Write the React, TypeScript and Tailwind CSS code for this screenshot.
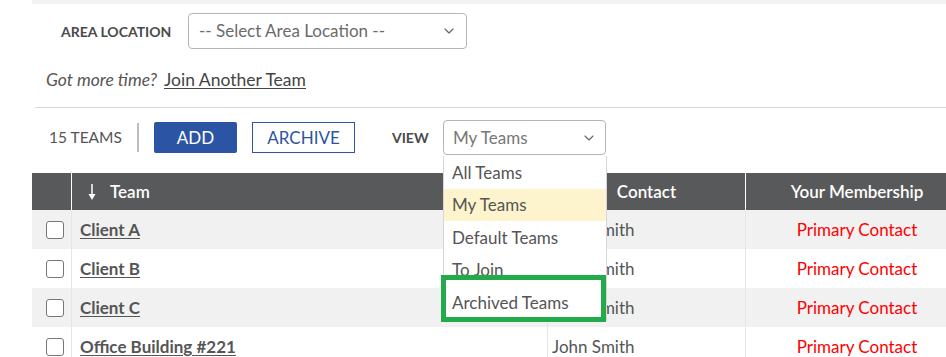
import { ChevronDown } from "lucide-react";

const rows = [
  { team: "Client A", contact: "John Smith", membership: "Primary Contact" },
  { team: "Client B", contact: "John Smith", membership: "Primary Contact" },
  { team: "Client C", contact: "John Smith", membership: "Primary Contact" },
  { team: "Office Building #221", contact: "John Smith", membership: "Primary Contact" },
];

const viewOptions = ["All Teams", "My Teams", "Default Teams", "To Join", "Archived Teams"];

function SortArrow() {
  return (
    <svg width="8" height="18" viewBox="0 0 8 18" className="shrink-0">
      <line x1="4" y1="1" x2="4" y2="12" stroke="white" strokeWidth="1.5" />
      <polygon points="0.5,11 7.5,11 4,17" fill="white" />
    </svg>
  );
}

export default function App() {
  return (
    <div className="relative w-[946px] h-[357px] overflow-hidden bg-white font-['Lato','Liberation_Sans',sans-serif] text-[#555]">
      <div className="ml-[32px] w-[936px]">
        {/* top strip */}
        <div className="h-[4px] bg-[#f2f2f2]" />

        {/* area location */}
        <div className="mt-[9px] flex items-center pl-[29px]">
          <span className="w-[127px] text-[14px] font-bold text-[#4a4a4a]">AREA LOCATION</span>
          <div className="flex h-[36px] w-[279px] items-center justify-between rounded-[4px] border border-[#b5b5b5] pl-[10px] pr-[9px]">
            <span className="text-[17px] text-[#6b6b6b]">-- Select Area Location --</span>
            <ChevronDown className="h-[16px] w-[16px] text-[#666]" strokeWidth={1.75} />
          </div>
        </div>

        <div className="mt-[19px] flex h-[24px] items-center pl-[14px] text-[17.5px]">
          <span className="italic text-[#555]">Got more time?</span>
          <span className="ml-[7px] text-[#444] underline underline-offset-2">Join Another Team</span>
        </div>

        <div className="ml-[3px] mt-[15px] border-t border-[#d9d9d9]" />

        {/* toolbar */}
        <div className="mt-[12px] flex h-[35px] items-center pl-[17px]">
          <span className="w-[71px] whitespace-nowrap text-[15.5px] text-[#555]">15 TEAMS</span>
          <div className="ml-[17px] h-[29px] w-[2px] bg-[#bdbdbd]" />
          <button className="ml-[15px] h-[31px] w-[83px] rounded-[2px] bg-[#2c54a4] text-[17px] text-white">
            ADD
          </button>
          <button className="ml-[15px] h-[31px] w-[103px] border border-[#2c54a4] text-[17px] text-[#2c54a4]">
            ARCHIVE
          </button>
          <span className="ml-[37px] w-[51px] text-[14px] font-bold text-[#4a4a4a]">VIEW</span>
          <div className="relative">
            <div className="flex h-[35px] w-[163px] items-center justify-between rounded-[4px] border border-[#b5b5b5] pl-[9px] pr-[8px]">
              <span className="text-[17px] text-[#777]">My Teams</span>
              <ChevronDown className="h-[16px] w-[16px] text-[#666]" strokeWidth={1.75} />
            </div>
            {/* open dropdown */}
            <div className="absolute left-0 top-[36px] z-10 w-[164px] border border-t-0 border-[#d6d6d6] bg-white text-[17px] text-[#555]">
              {viewOptions.map((opt) => (
                <div
                  key={opt}
                  className={`flex h-[32.5px] items-center pl-[8px] ${opt === "My Teams" ? "bg-[#fdf3cd]" : ""}`}
                >
                  {opt}
                </div>
              ))}
              {/* highlight annotation */}
              <div className="absolute left-[-3px] top-[119px] h-[47px] w-[165px] border-[5px] border-[#22aa4b]" />
            </div>
          </div>
        </div>

        {/* table */}
        <div className="mt-[18px] w-[936px]">
          <div className="grid h-[37px] grid-cols-[40px_476px_198px_222px] bg-[#58595b] text-[17px] font-semibold text-white">
            <div className="border-r border-white" />
            <div className="flex items-center gap-[14px] pl-[16px]">
              <SortArrow />
              <span>Team</span>
            </div>
            <div className="flex items-center justify-center border-r border-white">Contact</div>
            <div className="flex items-center justify-center">Your Membership</div>
          </div>
          {rows.map((r, i) => (
            <div
              key={r.team}
              className={`grid h-[39px] grid-cols-[40px_476px_198px_222px] text-[17px] ${i % 2 === 0 ? "bg-[#f1f1f1]" : "bg-white"}`}
            >
              <div className="flex items-center border-r border-[#e6e6e6] pl-[14px]">
                <div className="h-[18px] w-[18px] rounded-[3px] border-[1.5px] border-[#777] bg-white" />
              </div>
              <div className="flex items-center border-r border-[#e6e6e6] pl-[8px]">
                <span className="font-bold text-[#555] underline underline-offset-2">{r.team}</span>
              </div>
              <div className="flex items-center border-r border-[#e6e6e6] pl-[4px] text-[#555]">{r.contact}</div>
              <div className="flex items-center justify-center text-[#f00]">{r.membership}</div>
            </div>
          ))}
        </div>
      </div>
    </div>
  );
}
